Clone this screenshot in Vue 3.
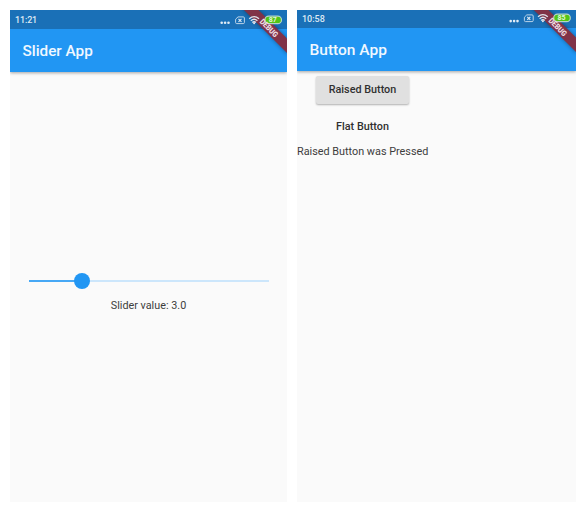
<script setup>
import { ref } from 'vue'

const screens = ref([
  { id: 'slider', time: '11:21', title: 'Slider App', battery: 87 },
  { id: 'button', time: '10:58', title: 'Button App', battery: 85 },
])
const sliderValue = ref(3)
const sliderPercent = 22.2
const message = ref('Raised Button was Pressed')
</script>

<template>
  <main class="stage">
    <section v-for="s in screens" :key="s.id" class="phone" :class="s.id">
      <header class="top">
        <div class="status"><span class="time">{{ s.time }}</span></div>
        <div class="appbar"><h1>{{ s.title }}</h1></div>
      </header>
      <svg class="corner" width="80" height="50" viewBox="0 0 80 50">
        <defs>
          <filter :id="'soft-' + s.id" x="-30%" y="-30%" width="160%" height="160%">
            <feGaussianBlur stdDeviation="2" />
          </filter>
        </defs>
        <g :transform="s.id === 'button' ? 'translate(0 -.9)' : 'translate(0 0)'">
          <path d="M35 -2H49.500L82 30.500V45Z" fill="#000" opacity=".4" :filter="`url(#soft-${s.id})`" />
          <path d="M35 -2H49.500L82 30.500V45Z" fill="#803348" />
        </g>
        <g fill="#e2edf6" :transform="s.id === 'button' ? 'translate(0 -1.600)' : 'translate(0 0)'">
          <circle cx="14.700" cy="12.700" r="1.300" />
          <circle cx="18.100" cy="12.700" r="1.300" />
          <circle cx="21.500" cy="12.700" r="1.300" />
        </g>
        <g :transform="s.id === 'button' ? 'translate(-.2 -1.600)' : 'translate(0 .4)'">
          <path d="M31 6.500H36.300Q37.400 6.500 37.400 7.600V12.100Q37.400 13.200 36.300 13.200H29.700Q28.600 13.200 28.600 12.100V8.800Z" fill="none" stroke="#bad3e8" stroke-width="1" />
          <path d="M31.500 8.400L34.500 11.400M34.500 8.400L31.500 11.400" stroke="#dce9f4" stroke-width="1.200" />
          <g fill="none" stroke="#e0e4ec" stroke-width="1.350">
            <path d="M42.200 8.300Q47.100 4.200 52 8.300" />
            <path d="M43.800 10.300Q47.100 7.500 50.400 10.300" />
            <path d="M45.300 12.100Q47.100 10.500 48.900 12.100" />
          </g>
          <circle cx="47.100" cy="12.900" r="1" fill="#e0e4ec" />
          <rect x="57.900" y="5.800" width="16.600" height="7.500" rx="3.750" fill="#51c516" stroke="#b5d4c8" stroke-width="1.200" />
          <text class="level" x="65.800" y="12.100" text-anchor="middle">{{ s.battery }}</text>
        </g>
        <text
          class="debug"
          :transform="s.id === 'button' ? 'translate(61.900 16.900) rotate(45)' : 'translate(62.200 17.900) rotate(45)'"
          x="0"
          y="2.900"
          text-anchor="middle"
          textLength="22"
          lengthAdjust="spacingAndGlyphs"
        >DEBUG</text>
      </svg>
      <div v-if="s.id === 'slider'" class="slider-body">
        <div class="track">
          <div class="active" :style="{ width: sliderPercent + '%' }"></div>
          <div class="thumb"></div>
          <div class="rest"></div>
        </div>
        <p class="value">Slider value: {{ sliderValue.toFixed(1) }}</p>
      </div>
      <div v-else class="button-body">
        <div class="buttons">
          <button class="raised">Raised Button</button>
          <button class="flat">Flat Button</button>
        </div>
        <p class="message">{{ message }}</p>
      </div>
    </section>
  </main>
</template>

<style>
body {
  margin: 0;
  background: #fff;
}
</style>

<style scoped>
.stage {
  box-sizing: border-box;
  width: 586px;
  height: 512px;
  padding: 10px;
  display: grid;
  grid-template-columns: 277px 279px;
  column-gap: 10px;
  font-family: Roboto, sans-serif;
  color: #3d3d3d;
}
.phone {
  position: relative;
  height: 492px;
  background: #fafafa;
  overflow: hidden;
  display: flex;
  flex-direction: column;
}
.top {
  flex: none;
  box-shadow: 0 1px 3px rgba(0, 0, 0, 0.35);
}
.status {
  height: 19px;
  display: flex;
  align-items: center;
  background: #1a70b7;
}
.button .status {
  height: 18px;
}
.time {
  padding: 1px 0 0 5px;
  font-size: 9px;
  line-height: 12px;
  font-weight: 500;
  letter-spacing: -0.150px;
  color: #dfeaf4;
}
.button .time {
  padding-top: 0;
  margin-top: -1px;
  letter-spacing: 0;
}
.appbar {
  height: 43px;
  display: flex;
  align-items: center;
  padding-left: 12.500px;
  background: #2196f3;
}
h1 {
  margin: 0;
  font-size: 15.500px;
  line-height: 20px;
  font-weight: 500;
  color: #f0f8ff;
}
.slider h1 {
  font-size: 15.300px;
}
.corner {
  position: absolute;
  top: 0;
  right: 0;
}
.level {
  font-size: 7px;
  font-weight: 700;
  fill: #e4f6dc;
}
.debug {
  font-size: 8px;
  font-weight: 900;
  fill: #eddde3;
}
.slider-body {
  padding: 201px 18px 0 19px;
}
.track {
  display: flex;
  align-items: center;
  height: 16px;
}
.active,
.rest {
  height: 2px;
}
.active {
  margin-right: -8px;
  background: #47a8f5;
}
.thumb {
  width: 16px;
  height: 16px;
  border-radius: 50%;
  background: #2196f3;
  flex: none;
  z-index: 1;
}
.rest {
  flex: 1;
  margin-left: -2px;
  background: #cce6fb;
}
p {
  margin: 0;
  font-size: 10.830px;
  line-height: 14px;
}
.value {
  margin-top: 10px;
  padding-right: 1px;
  text-align: center;
  font-size: 10.800px;
}
.buttons {
  width: 131px;
  padding-top: 5px;
  display: flex;
  flex-direction: column;
  align-items: center;
}
button {
  border: 0;
  padding: 0;
  font: 500 10.800px/14px Roboto, sans-serif;
  color: #303030;
}
.raised {
  width: 93px;
  height: 28px;
  border-radius: 2px;
  background: #e0e0e0;
  box-shadow: 0 1px 2px rgba(0, 0, 0, 0.3);
}
.flat {
  height: 28px;
  margin-top: 9px;
  background: transparent;
}
.message {
  margin-top: 4px;
  white-space: nowrap;
}
</style>
